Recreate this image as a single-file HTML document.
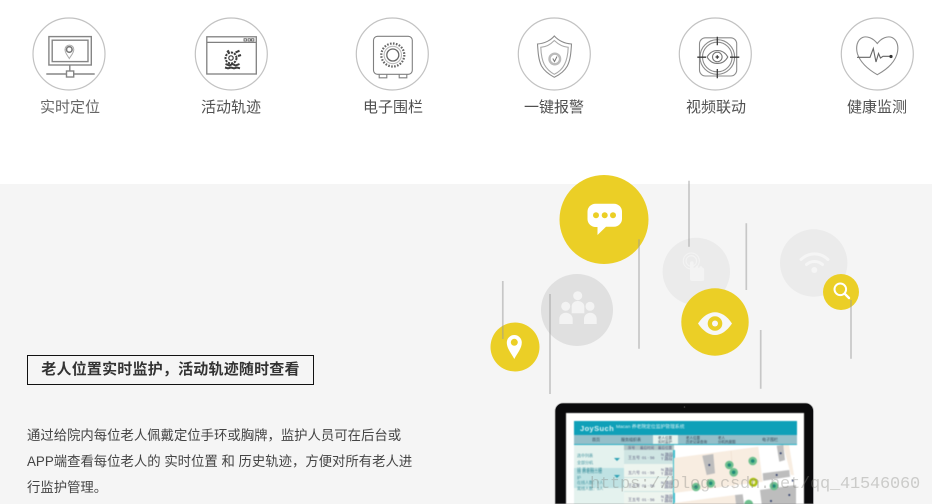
<!DOCTYPE html>
<html lang="zh">
<head>
<meta charset="utf-8">
<title>老人位置实时监护</title>
<style>
html,body{margin:0;padding:0;background:#fff}
body{width:932px;height:504px;overflow:hidden;position:relative;font-family:"Liberation Sans","Noto Sans CJK SC",sans-serif}
.bg{position:absolute;left:0;top:184px;width:932px;height:320px;background:#f5f5f5}
svg.art{position:absolute;left:0;top:0}
.soft{filter:blur(.35px)}
.lab{position:absolute;top:97px;width:120px;text-align:center;font-size:15px;line-height:22px;color:#505050}
.title{position:absolute;left:27px;top:355px;width:285px;height:28px;border:1px solid #111;text-align:center;font-size:15px;font-weight:700;line-height:28px;color:#333;letter-spacing:.2px}
.para{position:absolute;left:27px;top:423px;width:395px;font-size:13.36px;line-height:26.200px;color:#444}
.wm{position:absolute;left:590px;top:473px;font-family:"Liberation Mono",monospace;font-size:17px;line-height:24px;letter-spacing:-.2px;color:rgba(130,130,125,.36);white-space:nowrap}
.app{position:absolute;left:566px;top:413px;width:238px;height:91px;background:#fff;overflow:hidden;filter:blur(.6px)}
.app div{position:absolute}
.t{font-size:4px;line-height:5px;color:#557;white-space:nowrap}
</style>
</head>
<body>
<div class="bg"></div>

<svg class="art" width="932" height="504" viewBox="0 0 932 504" fill="none">
  <!-- outlined feature circles -->
  <g stroke="#c2c2c2" stroke-width="1.200">
    <circle cx="69" cy="54" r="36"/><circle cx="231.300" cy="54" r="36"/><circle cx="392.300" cy="54" r="36"/>
    <circle cx="554.300" cy="54" r="36"/><circle cx="715.300" cy="54" r="36"/><circle cx="877.300" cy="54" r="36"/>
  </g>
  <g class="soft">
  <!-- 1 monitor -->
  <g stroke="#858585" stroke-width="1.400">
    <rect x="48.900" y="36.600" width="42.400" height="28.400"/>
    <rect x="52.200" y="40.200" width="35.800" height="21.400"/>
    <path d="M46.300 74H66.300M73.700 74H94.700M69.800 65V71"/>
    <rect x="66.500" y="71" width="7.200" height="6" fill="#fff"/>
    <path d="M69.300 58.500C67.500 55.500 65 53 65 49.500a4.400 4.400 0 0 1 8.800 0C73.800 53 71 55.500 69.300 58.500Z" stroke="#aaa" stroke-width="1"/>
    <circle cx="69.300" cy="49.500" r="2.800" stroke="#777" stroke-width="1.600"/>
  </g>
  <!-- 2 window -->
  <g stroke="#808080" stroke-width="1.300">
    <rect x="206.800" y="36.800" width="49.500" height="37.200"/>
    <path d="M206.800 42.400H256.300"/>
    <path d="M244 38.800h2.400v2.200H244zM248 38.800h2.400v2.200H248zM251.500 38.800h2.400v2.200h-2.400z" stroke="#555" stroke-width=".8"/>
    <g stroke="#3c3c3c" stroke-width="2">
      <circle cx="231" cy="58" r="5.500" stroke-dasharray="2.200 1"/>
      <circle cx="231" cy="58" r="2.200" stroke-width="1.200"/>
      <path d="M225 67.500l3 .8 3-.8 3 .8 3-.8 3 .8M225.500 64l4 1.500 3-1.500 3 1.500 4-1.500M235.500 52.500l4-1.800M238 56l3-1M227 52l2-1.500"/>
    </g>
  </g>
  <!-- 3 safe -->
  <g stroke="#808080" stroke-width="1.100">
    <rect x="373.500" y="36.300" width="38.800" height="38" rx="4"/>
    <path d="M379.200 74.300v3.500h7.600v-3.500M399.200 74.300v3.500h7.600v-3.500"/>
    <circle cx="392.800" cy="55" r="11.500" stroke="#666" stroke-width="2.200" stroke-dasharray="1.600 1.400"/>
    <circle cx="392.800" cy="55" r="8.700" stroke="#bbb"/>
    <circle cx="392.800" cy="55" r="6" stroke="#666" stroke-width="1.300"/>
  </g>
  <!-- 4 shield -->
  <g stroke="#8c8c8c" stroke-width="1.100">
    <path d="M554.300 36C551 40 545 43.500 537.500 44 538 52 538.500 60 541.500 66 545 72 550 75 554.300 77.300 559 75 564 72 567.300 66 570.500 60 571 52 571.500 44 564 43.500 558 40 554.300 36Z"/>
    <path d="M554.300 40.500C551 44 546 47 540.800 47.300 541 53 542 60 544.300 64.500 547 69.500 551 72.500 554.300 74.300 558 72.500 562 69.500 564.500 64.500 566.800 60 568 53 568.200 47.300 563 47 558 44 554.300 40.500Z" stroke="#aaa"/>
    <circle cx="554.800" cy="59" r="5.300" stroke="#bbb" stroke-width="2.400"/>
    <path d="M552.800 58.500l1.700 3 2.500-5" stroke="#777" stroke-width="1"/>
  </g>
  <!-- 5 camera eye -->
  <g stroke="#8c8c8c" stroke-width="1.100">
    <rect x="699.500" y="37.800" width="37.200" height="38.200" rx="6"/>
    <circle cx="717.300" cy="57" r="17.300"/>
    <circle cx="717.300" cy="57" r="14.800"/>
    <path d="M707 57C710 52 714 50.500 717.300 50.500S725 52 727.800 57C725 62 721 63.500 717.300 63.500S710 62 707 57Z" stroke="#777"/>
    <circle cx="717.300" cy="57" r="4.800" stroke="#777"/>
    <path d="M717.300 36.700V45.200M717.300 69V78.300M697.300 57.200H706M730 57.200H739.300M715.500 57h3.600M717.300 55.200v3.600" stroke="#3a3a3a" stroke-width="1.300"/>
  </g>
  <!-- 6 heart -->
  <g stroke="#8c8c8c" stroke-width="1.100">
    <path d="M877.300 43.500C873 38 867 35.700 862.500 37.500 857 40 855.500 47 857.500 54 861 64 870 70.500 877.300 74.700 885 70.500 894 64 897 54 899 47 897.500 40 892 37.500 887.500 35.700 881.500 38 877.300 43.500Z"/>
    <path d="M857 57.300H870L873.300 48.500 876 62 878.500 53.500 880.500 58 883 56.300H891" stroke="#666"/>
    <circle cx="891" cy="56.500" r="1.600" fill="#333" stroke="none"/>
  </g>

  <!-- floating circles -->
  <circle cx="577" cy="310" r="36" fill="#e0e0e0"/>
  <circle cx="696.300" cy="271.500" r="33.700" fill="#ebebeb"/>
  <circle cx="813.700" cy="263" r="33.700" fill="#ebebeb"/>
  <circle cx="604" cy="219.500" r="44.500" fill="#ebcf26"/>
  <circle cx="515" cy="347" r="24.500" fill="#ebcf26"/>
  <circle cx="715" cy="322" r="33.700" fill="#ebcf26"/>
  <circle cx="841" cy="292" r="18" fill="#ebcf26"/>

  <!-- chat -->
  <path d="M595.500 203.700H614a8 8 0 0 1 8 8v7a8 8 0 0 1-8 8H606L597.500 235V227H595.500a8 8 0 0 1-8-8v-7.300a8 8 0 0 1 8-8Z" fill="#fff"/>
  <g fill="#ebcf26"><circle cx="596" cy="215.300" r="3"/><circle cx="604.700" cy="215.300" r="3"/><circle cx="613" cy="215.300" r="3"/></g>
  <!-- people -->
  <g fill="#f3f3f3">
    <circle cx="577.700" cy="295.700" r="4.500"/><circle cx="565.700" cy="306.300" r="4.500"/><circle cx="590" cy="306.300" r="4.500"/>
    <path d="M571.700 313.300V306.500c0-3.300 2.700-5.500 6-5.500s6.600 2.200 6.600 5.500V313.300Z"/>
    <path d="M559.300 324v-5c0-3.500 2.700-6.300 6.500-6.300s6.900 2.800 6.900 6.300v5Z"/>
    <path d="M584 324v-5c0-3.500 2.700-6.300 6.300-6.300s6.400 2.800 6.400 6.300v5Z"/>
  </g>
  <!-- pin -->
  <path d="M514.300 359C511.500 353.500 506.800 348.500 506.800 342.500a7.500 7.500 0 0 1 15 0C521.800 348.500 517 353.500 514.300 359Z" fill="#fff"/>
  <circle cx="514.300" cy="342.300" r="3.500" fill="#ebcf26"/>
  <!-- eye -->
  <path d="M698 323.500C703 316 709 312.300 715 312.300S727 316 732 323.500C727 331 721 335 715 335S703 331 698 323.500Z" fill="#f7f7f7"/>
  <circle cx="715" cy="323.500" r="7.300" fill="#ebcf26"/>
  <circle cx="715" cy="323.500" r="3" fill="#f7f7f7"/>
  <!-- wifi -->
  <g stroke="#f5f5f5" stroke-width="3" stroke-linecap="round">
    <path d="M801 259.500C809 252 820 252 828 259.500"/>
    <path d="M806.500 264.500C811 260.500 818 260.500 822.500 264.500"/>
  </g>
  <circle cx="814.300" cy="270" r="3" fill="#f5f5f5"/>
  <!-- search -->
  <circle cx="840.300" cy="289.300" r="5.800" stroke="#fff" stroke-width="2"/>
  <path d="M844.800 293.800L849 298" stroke="#fff" stroke-width="2.400" stroke-linecap="round"/>
  <!-- touch -->
  <g stroke="#f3f3f3" stroke-width="1.100">
    <circle cx="691.300" cy="261" r="8"/><circle cx="691.300" cy="261" r="5.300"/>
  </g>
  <path d="M690 263a1.800 1.800 0 0 1 3.600 0V268h2v-1a1.400 1.400 0 0 1 2.800 0v1h1v-.5a1.400 1.400 0 0 1 2.800 0c.3 0 2 .5 2 2V279a2 2 0 0 1-2 2H692a2 2 0 0 1-2-2Z" fill="#f3f3f3"/>

  <!-- vertical lines -->
  <g stroke="#9a9a9a" stroke-opacity=".5" stroke-width="1.700">
    <path d="M502.800 281V339M550 294V394M639 239.300V348.700M689 180.700V246.700M746.300 223.300V290M760.700 330V388.700M851 300V358.700"/>
  </g>
  </g>
  <!-- laptop -->
  <path d="M555 504V411a8 8 0 0 1 8-8H805.500a8 8 0 0 1 8 8V504Z" fill="#0a0a0c" stroke="#b9b9b9" stroke-width=".8"/>
  <circle cx="684.500" cy="407" r=".8" fill="#444"/>
</svg>

<div class="lab" style="left:10px;color:#666">实时定位</div>
<div class="lab" style="left:171px">活动轨迹</div>
<div class="lab" style="left:333px">电子围栏</div>
<div class="lab" style="left:494px">一键报警</div>
<div class="lab" style="left:656px">视频联动</div>
<div class="lab" style="left:817px">健康监测</div>

<div class="title">老人位置实时监护，活动轨迹随时查看</div>
<div class="para">通过给院内每位老人佩戴定位手环或胸牌，监护人员可在后台或<br>APP端查看每位老人的 实时位置 和 历史轨迹，方便对所有老人进<br>行监护管理。</div>

<div class="app">
  <div style="left:8px;top:8px;width:223px;height:14px;background:#0fa0b8"></div>
  <div style="left:14px;top:9.500px;font-size:7.500px;line-height:11px;font-weight:700;color:#d9f2f5;letter-spacing:.4px;white-space:nowrap">JoySuch</div>
  <div style="left:50px;top:10px;font-size:4.800px;line-height:10px;color:#d9f2f5;white-space:nowrap">Macan 养老院定位监护管理系统</div>
  <div style="left:8px;top:22px;width:223px;height:9px;background:#94bfc9"></div>
  <div style="left:87px;top:22px;width:25px;height:9px;background:#e8f4ef"></div>
  <div class="t" style="left:26px;top:24px;color:#345">首页</div>
  <div class="t" style="left:55px;top:24px;color:#345">服务组织表</div>
  <div class="t" style="left:92px;top:23px;color:#345;font-size:3.500px;line-height:4px">老人位置<br>实时监护</div>
  <div class="t" style="left:120px;top:23px;color:#345;font-size:3.500px;line-height:4px">老人位置<br>历史记录查询</div>
  <div class="t" style="left:152px;top:23px;color:#345;font-size:3.500px;line-height:4px">老人<br>分机热度图</div>
  <div class="t" style="left:196px;top:24px;color:#345">电子围栏</div>
  <div style="left:8px;top:31px;width:223px;height:1px;background:#2ab0c4"></div>

  <div style="left:8px;top:32px;width:50px;height:59px;background:#e4f2ee"></div>
  <div style="left:8px;top:55px;width:50px;height:20px;background:#bfe2e3"></div>
  <div class="t" style="left:11px;top:39px;color:#3c8f9c;line-height:7px">选中列表<br>全部分机<br>班 养老院三楼</div>
  <div class="t" style="left:11px;top:56px;color:#3c8f9c;line-height:5.500px">班 养老院二楼<br>护<br>在线人数：7人<br>离线人数：5人</div>
  <div style="left:48px;top:45px;border:3px solid transparent;border-top:3px solid #2aa0b4;border-bottom:0"></div>
  <div style="left:48px;top:62px;border:3px solid transparent;border-top:3px solid #2aa0b4;border-bottom:0"></div>

  <div style="left:58px;top:32px;width:50px;height:59px;background:#eef5ef"></div>
  <div style="left:58px;top:32px;width:50px;height:5px;background:#b2c6c6"></div>
  <div style="left:58px;top:37px;width:50px;height:14px;background:#cfe5e3"></div>
  <div style="left:58px;top:64px;width:50px;height:1px;background:#cfe5e3"></div>
  <div style="left:58px;top:78px;width:50px;height:1px;background:#cfe5e3"></div>
  <div style="left:107px;top:37px;width:1.500px;height:54px;background:#3ebccb"></div>
  <div class="t" style="left:62px;top:32.500px;font-size:3.500px">序号</div>
  <div class="t" style="left:74px;top:32.500px;font-size:3.500px">最后时间</div>
  <div class="t" style="left:92px;top:32.500px;font-size:3.500px">最后位置</div>
  <div class="t" style="left:62px;top:42px">王五号</div><div class="t" style="left:76px;top:42px">01 · 56</div><div class="t" style="left:95px;top:40px;line-height:4px">N 路段<br>T 路段</div>
  <div class="t" style="left:62px;top:57px">五六号</div><div class="t" style="left:76px;top:57px">01 · 56</div><div class="t" style="left:95px;top:55px;line-height:4px">N 路段<br>T 路段</div>
  <div class="t" style="left:62px;top:70px">王五号</div><div class="t" style="left:76px;top:70px">01 · 56</div><div class="t" style="left:95px;top:68px;line-height:4px">N 路段<br>T 路段</div>
  <div class="t" style="left:62px;top:84px">王五号</div><div class="t" style="left:76px;top:84px">01 · 56</div><div class="t" style="left:95px;top:82px;line-height:4px">N 路段<br>T 路段</div>

  <svg style="position:absolute;left:108px;top:32px" width="122" height="59" viewBox="0 0 122 59">
    <path d="M0 13L84.300 1.700 88.700 36.700 0 48Z" fill="#f8ede1"/>
    <path d="M0 58L61 50 62 59H0Z" fill="#f8ede1"/>
    <path d="M109 0h6l5 30h-3Z" fill="#f8ede1"/>
    <path d="M28.300 10.700L39.300 9 41 28.300 32.700 30ZM102.700 .7L109.300 0 111 15 105.300 16.700ZM88.700 28.300L115.300 25 116 31.700 89.300 35.700ZM86 45L122 40V59H87.700ZM61 50L68.700 49.300 70 59H62Z" fill="#bdbdbd"/>
    <path d="M57 6L60 44" stroke="#ead9c8" stroke-width=".5"/>
    <g fill="#2a3a6a"><circle cx="35.300" cy="20" r="1"/><circle cx="106.700" cy="8.300" r="1"/><circle cx="102.700" cy="30" r="1"/><circle cx="118.700" cy="35.700" r=".9"/><circle cx="115.300" cy="50" r="1"/><circle cx="97" cy="56" r="1"/></g>
    <g fill="#6fc08f">
      <circle cx="55.300" cy="20" r="4.300"/><circle cx="59.700" cy="27.300" r="4.300"/><circle cx="78.700" cy="16" r="4.300"/>
      <circle cx="100" cy="41" r="4.300"/><circle cx="36.700" cy="38.300" r="4.300"/><circle cx="22" cy="42" r="4.300"/><circle cx="74.700" cy="59" r="4.300"/>
    </g>
    <circle cx="79.300" cy="37.300" r="4.500" fill="#a9bf10"/><circle cx="79.300" cy="37.300" r="2" fill="#eef0b0"/>
    <g fill="#1f8a78"><circle cx="55.300" cy="20" r="1.800"/><circle cx="59.700" cy="27.300" r="1.800"/><circle cx="78.700" cy="16" r="1.800"/><circle cx="100" cy="41" r="1.800"/><circle cx="36.700" cy="38.300" r="1.800"/><circle cx="22" cy="42" r="1.800"/></g>
  </svg>
</div>

<div class="wm">https://blog.csdn.net/qq_41546060</div>
</body>
</html>
